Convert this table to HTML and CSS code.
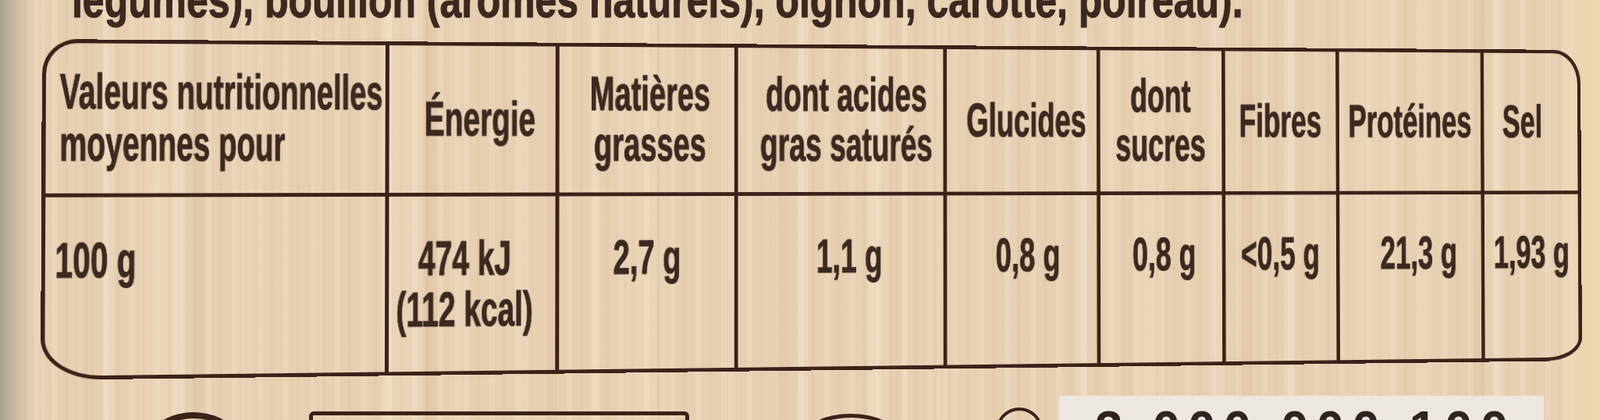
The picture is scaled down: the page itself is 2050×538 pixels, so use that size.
FILE: index.html
```html
<!DOCTYPE html>
<html lang="fr">
<head>
<meta charset="utf-8">
<title>Valeurs nutritionnelles</title>
<link rel="stylesheet" href="styles.css">
</head>
<body>
<div class="page">
  <p class="ingredients"><span class="t">légumes), bouillon (arômes naturels), oignon, carotte, poireau).</span></p>

  <div class="table">
    <div class="cell head first"><span class="t tight">Valeurs nutritionnelles<br>moyennes pour</span></div>
    <div class="cell head pl20"><span class="t">Énergie</span></div>
    <div class="cell head pl8"><span class="t">Matières<br>grasses</span></div>
    <div class="cell head pl16"><span class="t">dont acides<br>gras saturés</span></div>
    <div class="cell head pl14"><span class="t">Glucides</span></div>
    <div class="cell head"><span class="t">dont<br>sucres</span></div>
    <div class="cell head"><span class="t">Fibres</span></div>
    <div class="cell head"><span class="t">Protéines</span></div>
    <div class="cell head pr24"><span class="t">Sel</span></div>

    <div class="cell data first"><span class="t">100 g</span></div>
    <div class="cell data pr18"><span class="t">474 kJ<br>(112 kcal)</span></div>
    <div class="cell data"><span class="t">2,7 g</span></div>
    <div class="cell data pl22"><span class="t">1,1 g</span></div>
    <div class="cell data pl16"><span class="t">0,8 g</span></div>
    <div class="cell data pl8"><span class="t">0,8 g</span></div>
    <div class="cell data"><span class="t">&lt;0,5 g</span></div>
    <div class="cell data pl24"><span class="t">21,3 g</span></div>
    <div class="cell data"><span class="t">1,93 g</span></div>
  </div>

  <div class="footer">
    <div class="shape blob"></div>
    <div class="shape box"></div>
    <div class="shape oval"></div>
    <div class="shape emark">E</div>
    <div class="panel">3 000 000 100</div>
  </div>
</div>
</body>
</html>
```

FILE: styles.css
```css
html, body {
  margin: 0;
  padding: 0;
  overflow: hidden;
}

.page {
  width: 2050px;
  height: 538px;
  overflow: hidden;
  background-color: #e7cfb1;
  background-image:
    linear-gradient(90deg, #a99c91 0, #bcad9e 10px, #d6c1a7 26px, rgba(230, 206, 176, 0) 46px),
    linear-gradient(90deg, rgba(230, 206, 176, 0) 1995px, rgba(238, 216, 172, 0.75) 2035px),
    repeating-linear-gradient(90deg, rgba(255, 246, 230, 0.16) 0 7px, rgba(255, 246, 230, 0) 7px 17px, rgba(175, 125, 75, 0.05) 17px 21px, rgba(0, 0, 0, 0) 21px 33px),
    repeating-linear-gradient(90deg, rgba(255, 250, 240, 0) 0 43px, rgba(255, 250, 240, 0.14) 43px 57px, rgba(0, 0, 0, 0) 57px 89px),
    repeating-linear-gradient(90deg, rgba(170, 120, 70, 0) 0 97px, rgba(170, 120, 70, 0.06) 97px 113px, rgba(0, 0, 0, 0) 113px 149px),
    repeating-linear-gradient(90deg, rgba(255, 240, 215, 0) 0 180px, rgba(255, 240, 215, 0.12) 180px 230px, rgba(0, 0, 0, 0) 230px 311px);
  font-family: "Liberation Sans Narrow", "Liberation Sans", Arial, sans-serif;
  color: #3b281f;
}

.t {
  display: inline-block;
  flex-shrink: 0;
  white-space: nowrap;
  font-weight: bold;
  font-size: 64px;
  line-height: 67px;
  transform: scaleX(0.61);
  transform-origin: 50% 50%;
  text-align: center;
  -webkit-text-stroke: 0.9px #3b281f;
  text-shadow: 0 0 1.5px rgba(59, 40, 31, 0.5);
}

.t.tight {
  transform: scaleX(0.588);
}

.ingredients {
  margin: -33px 0 0 92px;
  height: 67px;
  white-space: nowrap;
}

.ingredients .t {
  transform: scaleX(0.78);
  transform-origin: 0 50%;
  text-align: left;
}

.table {
  margin: 16px 0 0 54px;
  width: 2068px;
  height: 437px;
  box-sizing: border-box;
  border: 5px solid #3b2219;
  border-radius: 43px 40px 53px 75px / 45px 48px 32px 52px;
  display: grid;
  grid-template-columns: 423.5px 219px 235px 281px 211px 175px 162px 209px 142.5px;
  grid-template-rows: 197.5px 229.5px;
  transform-origin: 0 0;
  transform: matrix3d(1.046359, 0.0074323, 0, 0.00004732, -0.004567, 0.997876, 0, -0.000004861, 0, 0, 1, 0, 0, 0, 0, 1);
}

.cell {
  box-sizing: border-box;
  border-left: 5px solid #3b2219;
  display: flex;
  justify-content: center;
  min-width: 0;
}

.cell.first {
  border-left: 0;
  justify-content: flex-start;
}

.cell.first .t {
  transform-origin: 0 50%;
  text-align: left;
}

.head {
  border-bottom: 5px solid #3b2219;
  align-items: center;
}

.head.first {
  padding-left: 17px;
}

.data {
  align-items: flex-start;
  padding-top: 48px;
}

.data.first {
  padding-left: 12px;
}

.pl8 { padding-left: 8px; }
.pl14 { padding-left: 14px; }
.pl16 { padding-left: 16px; }
.pl20 { padding-left: 20px; }
.pl22 { padding-left: 22px; }
.pl24 { padding-left: 24px; }
.pr18 { padding-right: 18px; }
.pr24 { padding-right: 24px; }

.footer {
  display: flex;
  align-items: flex-start;
  margin-top: 20px;
  height: 60px;
}

.shape {
  box-sizing: border-box;
  flex-shrink: 0;
  border: 5px solid #3b2219;
}

.blob {
  margin: 21px 0 0 178px;
  width: 140px;
  height: 60px;
  border-radius: 50% 50% 0 0 / 100% 100% 0 0;
  border-width: 8px;
}

.box {
  margin: 20px 0 0 78px;
  width: 487px;
  height: 50px;
  border-radius: 6px;
}

.oval {
  margin: 23px 0 0 147px;
  width: 120px;
  height: 60px;
  border-radius: 50%;
}

.emark {
  margin: 15px 0 0 126px;
  width: 60px;
  height: 60px;
  border-width: 4px;
  border-radius: 50%;
  font-size: 40px;
  line-height: 52px;
  text-align: center;
  font-weight: bold;
}

.panel {
  margin: 0 0 0 21px;
  width: 621px;
  height: 40px;
  flex-shrink: 0;
  box-sizing: border-box;
  background: #ede7e1;
  padding: 10px 0 0 46px;
  font-family: "Liberation Sans", Arial, sans-serif;
  font-weight: bold;
  font-size: 64px;
  line-height: 67px;
  letter-spacing: 10px;
  white-space: nowrap;
  overflow: hidden;
  color: #2e2420;
}
```
